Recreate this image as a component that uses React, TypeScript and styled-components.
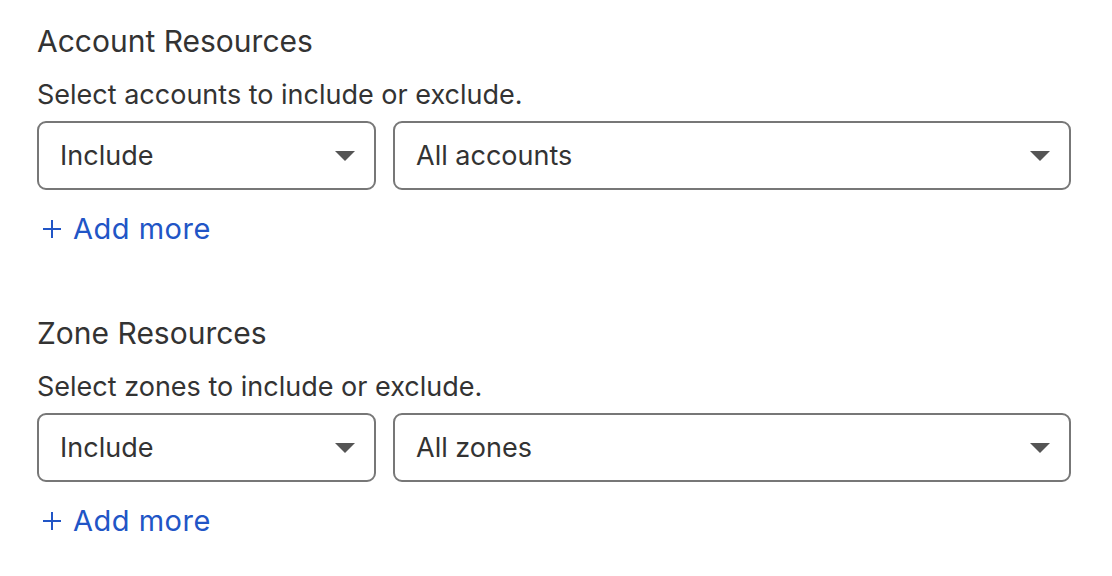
import React from 'react';
import styled, {createGlobalStyle} from 'styled-components';

const GlobalStyle = createGlobalStyle`
    html, body {
        margin: 0;
        padding: 0;
        background: #ffffff;
    }
    body {
        font-family: Inter, "Liberation Sans", Arial, sans-serif;
        color: #333333;
    }
`;

const Page = styled.div`
    display: flex;
    flex-direction: column;
    gap: 66px;
    padding: 22px 41px 0 37px;
`;

const Section = styled.section`
    display: flex;
    flex-direction: column;
`;

const Heading = styled.h2`
    margin: 0;
    font-size: 30px;
    font-weight: 400;
    line-height: 38px;
    color: #333333;
`;

const Description = styled.p`
    margin: 19px 0 0;
    font-size: 27px;
    line-height: 32px;
    color: #333333;
`;

const SelectRow = styled.div`
    display: grid;
    grid-template-columns: 339px 1fr;
    gap: 17px;
    margin-top: 10px;
`;

const SelectBox = styled.button`
    box-sizing: border-box;
    display: flex;
    align-items: center;
    justify-content: space-between;
    height: 69px;
    padding: 0 19px 0 21px;
    border: 2px solid #777777;
    border-radius: 9px;
    background: #ffffff;
    font-family: inherit;
    font-size: 27px;
    color: #333333;
    text-align: left;
    cursor: pointer;
`;

const Caret = styled.span`
    width: 0;
    height: 0;
    border-left: 10px solid transparent;
    border-right: 10px solid transparent;
    border-top: 10px solid #555555;
`;

const AddMore = styled.a`
    display: flex;
    align-items: center;
    gap: 11px;
    margin-top: 20px;
    padding-left: 5px;
    font-size: 29px;
    letter-spacing: 0.5px;
    line-height: 38px;
    color: #2155c6;
    text-decoration: none;
    cursor: pointer;
`;

const PlusIcon = () => (
    <svg width='20' height='20' viewBox='0 0 20 20' aria-hidden='true'>
        <path d='M10 1v18M1 10h18' stroke='#2155c6' strokeWidth='2'/>
    </svg>
);

type ResourceProps = {
    title: string;
    description: string;
    scope: string;
};

const ResourceSection = ({title, description, scope}: ResourceProps) => (
    <Section>
        <Heading>{title}</Heading>
        <Description>{description}</Description>
        <SelectRow>
            <SelectBox>
                <span>{'Include'}</span>
                <Caret/>
            </SelectBox>
            <SelectBox>
                <span>{scope}</span>
                <Caret/>
            </SelectBox>
        </SelectRow>
        <AddMore>
            <PlusIcon/>
            {'Add more'}
        </AddMore>
    </Section>
);

export default function App() {
    return (
        <>
            <GlobalStyle/>
            <Page>
                <ResourceSection
                    title='Account Resources'
                    description='Select accounts to include or exclude.'
                    scope='All accounts'
                />
                <ResourceSection
                    title='Zone Resources'
                    description='Select zones to include or exclude.'
                    scope='All zones'
                />
            </Page>
        </>
    );
}
